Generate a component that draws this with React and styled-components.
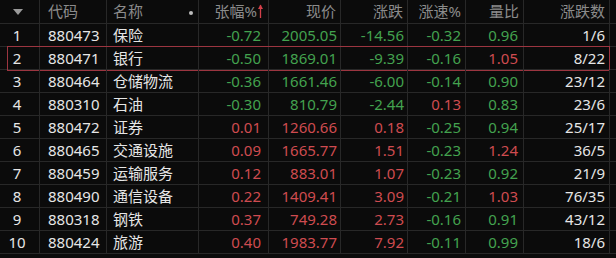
import React from 'react';
import styled, { createGlobalStyle } from 'styled-components';

const GlobalStyle = createGlobalStyle`
    body {
        margin: 0;
        background: #0b0b0b;
        font-family: "Noto Sans", "Noto Sans CJK SC", sans-serif;
    }
`;

const COLS = '40px 67px 92px 70px 72px 67px 58px 58px 86px';

const UP = '#cf4b50';
const DOWN = '#43a24f';
const FLAT = '#e6e6e6';

const rows = [
    ['1', '880473', '保险', '-0.72', '2005.05', '-14.56', '-0.32', '0.96', '1/6'],
    ['2', '880471', '银行', '-0.50', '1869.01', '-9.39', '-0.16', '1.05', '8/22'],
    ['3', '880464', '仓储物流', '-0.36', '1661.46', '-6.00', '-0.14', '0.90', '23/12'],
    ['4', '880310', '石油', '-0.30', '810.79', '-2.44', '0.13', '0.83', '23/6'],
    ['5', '880472', '证券', '0.01', '1260.66', '0.18', '-0.25', '0.94', '25/17'],
    ['6', '880465', '交通设施', '0.09', '1665.77', '1.51', '-0.23', '1.24', '36/5'],
    ['7', '880459', '运输服务', '0.12', '883.01', '1.07', '-0.23', '0.92', '21/9'],
    ['8', '880490', '通信设备', '0.22', '1409.41', '3.09', '-0.21', '1.03', '76/35'],
    ['9', '880318', '钢铁', '0.37', '749.28', '2.73', '-0.16', '0.91', '43/12'],
    ['10', '880424', '旅游', '0.40', '1983.77', '7.92', '-0.11', '0.99', '18/6'],
];

const Table = styled.div`
    width: 616px;
    height: 258px;
    background: #0b0b0b;
    overflow: hidden;
`;

const Row = styled.div`
    position: relative;
    display: grid;
    grid-template-columns: ${COLS};
    height: ${(p) => (p.$header ? 23 : 22)}px;
    border-bottom: 1px solid #282828;

    ${(p) => p.$selected && `
        &::after {
            content: "";
            position: absolute;
            left: 7px;
            right: 6px;
            top: -1px;
            bottom: -2px;
            border: 1px solid #9c3540;
            pointer-events: none;
        }
    `}
`;

const Cell = styled.div`
    display: flex;
    align-items: center;
    justify-content: ${(p) => p.$align || 'flex-end'};
    padding: ${(p) => p.$pad || '0 4px 0 0'};
    border-right: 1px solid #282828;
    font-size: 15px;
    line-height: 1;
    color: ${(p) => p.$color || FLAT};
    white-space: nowrap;
    position: relative;
`;

const HeadCell = styled(Cell)`
    color: #8b8b8b;
`;

const Caret = styled.span`
    width: 0;
    height: 0;
    border-left: 5px solid transparent;
    border-right: 5px solid transparent;
    border-top: 6px solid #9a9a9a;
    margin-top: 1px;
`;

const Dot = styled.span`
    position: absolute;
    right: 5px;
    top: 11px;
    width: 4px;
    height: 4px;
    border-radius: 50%;
    background: #bdbdbd;
`;

const SortArrow = styled.svg`
    margin-left: 1px;
    margin-top: -2px;
`;

const colorOf = (v) => {
    const n = parseFloat(v);
    if (n > 0) return UP;
    if (n < 0) return DOWN;
    return FLAT;
};

const App = () => {
    return (
        <>
            <GlobalStyle />
            <Table>
                <Row $header>
                    <HeadCell $align="center" $pad="0 4px 0 0"><Caret /></HeadCell>
                    <HeadCell $align="flex-start" $pad="0 0 0 8px">代码</HeadCell>
                    <HeadCell $align="flex-start" $pad="0 0 0 6px">名称<Dot /></HeadCell>
                    <HeadCell $pad="0 5px 0 0">
                        张幅%
                        <SortArrow width="5" height="14" viewBox="0 0 5 14">
                            <path d="M2.5 1 L2.5 14" stroke="#d5404a" strokeWidth="1.3" />
                            <path d="M0 5 L2.5 0.5 L5 5 Z" fill="#d5404a" />
                        </SortArrow>
                    </HeadCell>
                    <HeadCell>现价</HeadCell>
                    <HeadCell>涨跌</HeadCell>
                    <HeadCell>涨速%</HeadCell>
                    <HeadCell>量比</HeadCell>
                    <HeadCell>涨跌数</HeadCell>
                </Row>
                {rows.map((r) => {
                    const dir = colorOf(r[3]);
                    return (
                        <Row key={r[1]} $selected={r[0] === '2'}>
                            <Cell $align="center" $pad="0 5px 0 0">{r[0]}</Cell>
                            <Cell $align="flex-start" $pad="0 0 0 8px">{r[1]}</Cell>
                            <Cell $align="flex-start" $pad="0 0 0 6px">{r[2]}</Cell>
                            <Cell $pad="0 7px 0 0" $color={dir}>{r[3]}</Cell>
                            <Cell $pad="0 3px 0 0" $color={dir}>{r[4]}</Cell>
                            <Cell $pad="0 3px 0 0" $color={colorOf(r[5])}>{r[5]}</Cell>
                            <Cell $color={colorOf(r[6])}>{r[6]}</Cell>
                            <Cell $pad="0 5px 0 0" $color={parseFloat(r[7]) >= 1 ? UP : DOWN}>{r[7]}</Cell>
                            <Cell>{r[8]}</Cell>
                        </Row>
                    );
                })}
            </Table>
        </>
    );
};

export default App;
